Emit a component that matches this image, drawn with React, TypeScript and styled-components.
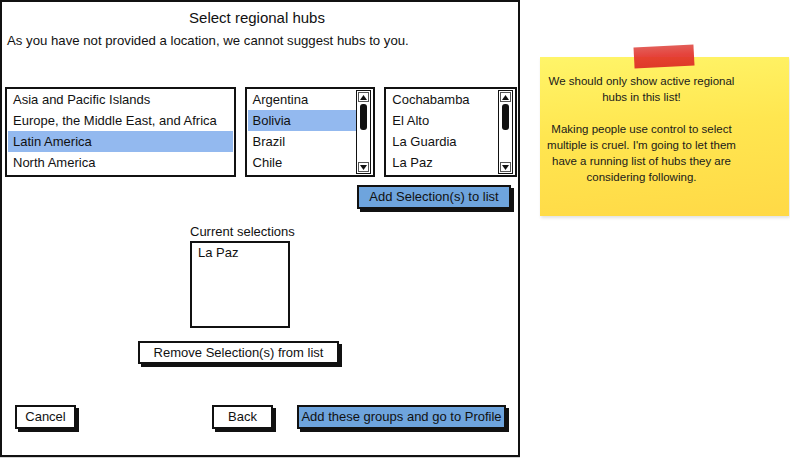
import React from 'react';
import styled, { createGlobalStyle } from 'styled-components';

const GlobalStyle = createGlobalStyle`
  body {
    margin: 0;
    background: #ffffff;
    font-family: 'Liberation Sans', Arial, sans-serif;
    color: #111111;
  }
`;

const Page = styled.div`
  display: flex;
  align-items: flex-start;
  gap: 20px;
  width: 790px;
  height: 458px;
`;

const Frame = styled.div`
  box-sizing: border-box;
  width: 520px;
  height: 457px;
  border: 2px solid #111;
  padding: 6px 1px 0 3px;
  display: flex;
  flex-direction: column;
  box-shadow: 0 2px 0 #d4d4d4;
`;

const Title = styled.div`
  text-align: center;
  font-size: 15px;
  line-height: 20px;
  padding-right: 8px;
`;

const Subtitle = styled.div`
  margin-top: 4px;
  padding-left: 2px;
  font-size: 13.2px;
  line-height: 18px;
`;

const ListRow = styled.div`
  display: flex;
  gap: 9px;
  margin-top: 37px;
`;

const ListBox = styled.div<{ $width: number }>`
  box-sizing: border-box;
  width: ${(p) => p.$width}px;
  height: 90px;
  border: 2px solid #111;
  padding: 0 1px;
  display: flex;
  align-items: stretch;
  background: #fff;
`;

const Items = styled.div`
  flex: 1;
  display: flex;
  flex-direction: column;
  overflow: hidden;
`;

const Item = styled.div<{ $selected?: boolean }>`
  height: 21px;
  line-height: 22px;
  padding-left: 5px;
  font-size: 13px;
  white-space: nowrap;
  background: ${(p) => (p.$selected ? '#93b9ef' : 'transparent')};
`;

const Scrollbar = styled.div`
  box-sizing: border-box;
  width: 15px;
  margin: 1px 1px 1px 0;
  border: 1.5px solid #111;
  display: flex;
  flex-direction: column;
  align-items: center;
`;

const Arrow = styled.div<{ $bottom?: boolean }>`
  box-sizing: border-box;
  width: 11px;
  height: 10px;
  margin: ${(p) => (p.$bottom ? '0 0 1px' : '1px 0 0')};
  display: flex;
  align-items: center;
  justify-content: center;
  border: 1px solid #555;
`;

const Thumb = styled.div`
  width: 7px;
  height: 26px;
  margin-top: 2px;
  border-radius: 3px;
  background: #111;
`;

const Track = styled.div`
  flex: 1;
`;

const Button = styled.div<{ $primary?: boolean }>`
  box-sizing: border-box;
  height: 24px;
  border: 2px solid #111;
  box-shadow: 3px 3px 0 #111;
  background: ${(p) => (p.$primary ? '#6ea4dd' : '#ffffff')};
  font-size: 13px;
  line-height: 20px;
  text-align: center;
  white-space: nowrap;
`;

const AddButton = styled(Button)`
  align-self: flex-end;
  width: 154px;
  margin-top: 8px;
  margin-right: 6px;
`;

const SelectionGroup = styled.div`
  align-self: center;
  margin-right: 42px;
  margin-top: 15px;
  display: flex;
  flex-direction: column;
  align-items: center;
`;

const SelectionBlock = styled.div`
  width: 100px;
`;

const Label = styled.div`
  font-size: 13px;
  line-height: 15px;
  white-space: nowrap;
`;

const SelectedBox = styled.div`
  box-sizing: border-box;
  margin-top: 2px;
  height: 87px;
  border: 2px solid #111;
  padding: 2px 6px;
  font-size: 13px;
  line-height: 16px;
`;

const RemoveButton = styled(Button)`
  width: 201px;
  height: 23px;
  line-height: 19px;
  margin-top: 13px;
  margin-right: 3px;
`;

const Footer = styled.div`
  display: flex;
  align-items: center;
  margin-top: 41px;
  padding-left: 10px;
`;

const FooterButton = styled(Button)<{ $width: number }>`
  width: ${(p) => p.$width}px;
`;

const Spacer = styled.div`
  flex: 1;
`;

const Note = styled.div`
  position: relative;
  box-sizing: border-box;
  margin-top: 57px;
  width: 249px;
  height: 159px;
  padding: 16px 50px 0 4px;
  background: linear-gradient(175deg, #fff569 0%, #ffe650 45%, #ffd946 100%);
  box-shadow: 1px 2px 3px rgba(0, 0, 0, 0.12);
  font-size: 11.5px;
  line-height: 16px;
  text-align: center;
  color: #1a1a1a;
`;

const Tape = styled.div`
  position: absolute;
  left: 94px;
  top: -11px;
  width: 60px;
  height: 21px;
  transform: rotate(-3deg);
  background: linear-gradient(180deg, #e0504a 0%, #e3332b 45%, #dc2a24 100%);
  opacity: 0.92;
`;

const NoteGap = styled.div`
  height: 16px;
`;

const ArrowUp = () => (
  <svg width="7" height="5" viewBox="0 0 7 5">
    <path d="M0 5 L3.5 0 L7 5 Z" fill="#111" />
  </svg>
);

const ArrowDown = () => (
  <svg width="7" height="5" viewBox="0 0 7 5">
    <path d="M0 0 L3.5 5 L7 0 Z" fill="#111" />
  </svg>
);

const ScrollTrack: React.FC = () => (
  <Scrollbar>
    <Arrow>
      <ArrowUp />
    </Arrow>
    <Thumb />
    <Track />
    <Arrow $bottom>
      <ArrowDown />
    </Arrow>
  </Scrollbar>
);

type ListProps = {
  width: number;
  items: string[];
  selected?: string;
  scroll?: boolean;
};

const List: React.FC<ListProps> = ({ width, items, selected, scroll }) => (
  <ListBox $width={width}>
    <Items>
      {items.map((item) => (
        <Item key={item} $selected={item === selected}>
          {item}
        </Item>
      ))}
    </Items>
    {scroll && <ScrollTrack />}
  </ListBox>
);

const regions = [
  'Asia and Pacific Islands',
  'Europe, the Middle East, and Africa',
  'Latin America',
  'North America',
];

const countries = ['Argentina', 'Bolivia', 'Brazil', 'Chile'];

const cities = ['Cochabamba', 'El Alto', 'La Guardia', 'La Paz'];

export default function App() {
  return (
    <>
      <GlobalStyle />
      <Page>
        <Frame>
          <Title>Select regional hubs</Title>
          <Subtitle>As you have not provided a location, we cannot suggest hubs to you.</Subtitle>
          <ListRow>
            <List width={231} items={regions} selected="Latin America" />
            <List width={131} items={countries} selected="Bolivia" scroll />
            <List width={133} items={cities} scroll />
          </ListRow>
          <AddButton $primary>Add Selection(s) to list</AddButton>
          <SelectionGroup>
            <SelectionBlock>
              <Label>Current selections</Label>
              <SelectedBox>La Paz</SelectedBox>
            </SelectionBlock>
            <RemoveButton>Remove Selection(s) from list</RemoveButton>
          </SelectionGroup>
          <Footer>
            <FooterButton $width={61}>Cancel</FooterButton>
            <Spacer />
            <FooterButton $width={61}>Back</FooterButton>
            <FooterButton $width={209} $primary style={{ marginLeft: 24, marginRight: 11 }}>
              Add these groups and go to Profile
            </FooterButton>
          </Footer>
        </Frame>
        <Note>
          <Tape />
          We should only show active regional hubs in this list!
          <NoteGap />
          Making people use control to select multiple is cruel. I'm going to let them have a
          running list of hubs they are considering following.
        </Note>
      </Page>
    </>
  );
}
